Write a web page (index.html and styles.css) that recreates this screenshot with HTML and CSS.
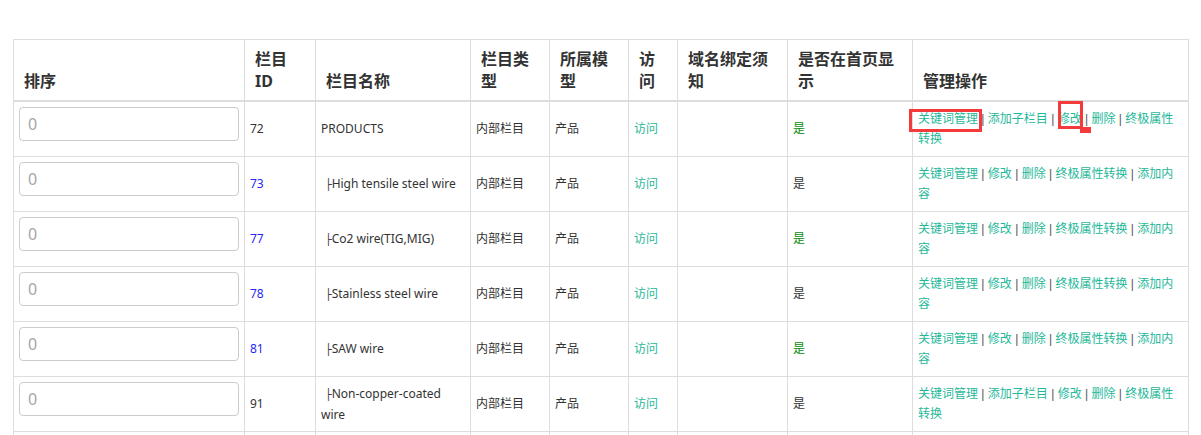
FILE: index.html
```html
<!DOCTYPE html>
<html lang="zh-CN">
<head>
<meta charset="utf-8">
<title>栏目管理</title>
<link rel="stylesheet" href="styles.css">
</head>
<body>
<div class="page">
  <table class="list">
    <colgroup>
      <col class="c-sort"><col class="c-id"><col class="c-name"><col class="c-type"><col class="c-model"><col class="c-visit"><col class="c-domain"><col class="c-home"><col class="c-ops">
    </colgroup>
    <thead>
      <tr>
        <th>排序</th>
        <th>栏目<br>ID</th>
        <th>栏目名称</th>
        <th>栏目类型</th>
        <th>所属模型</th>
        <th>访问</th>
        <th>域名绑定须知</th>
        <th>是否在首页显示</th>
        <th>管理操作</th>
      </tr>
    </thead>
    <tbody>
      <tr>
        <td><input class="sort-input" type="text" placeholder="0"></td>
        <td>72</td>
        <td>PRODUCTS</td>
        <td>内部栏目</td>
        <td>产品</td>
        <td><a class="lnk">访问</a></td>
        <td></td>
        <td><span class="yes">是</span></td>
        <td class="ops"><a class="lnk">关键词管理</a><span class="sep"> | </span><a class="lnk">添加子栏目</a><span class="sep"> | </span><a class="lnk">修改</a><span class="sep"> | </span><a class="lnk">删除</a><span class="sep"> | </span><a class="lnk">终极属性转换</a></td>
      </tr>
      <tr>
        <td><input class="sort-input" type="text" placeholder="0"></td>
        <td><a class="idl">73</a></td>
        <td><span class="tree">├</span>High tensile steel wire</td>
        <td>内部栏目</td>
        <td>产品</td>
        <td><a class="lnk">访问</a></td>
        <td></td>
        <td>是</td>
        <td class="ops"><a class="lnk">关键词管理</a><span class="sep"> | </span><a class="lnk">修改</a><span class="sep"> | </span><a class="lnk">删除</a><span class="sep"> | </span><a class="lnk">终极属性转换</a><span class="sep"> | </span><a class="lnk">添加内容</a></td>
      </tr>
      <tr>
        <td><input class="sort-input" type="text" placeholder="0"></td>
        <td><a class="idl">77</a></td>
        <td><span class="tree">├</span>Co2 wire(TIG,MIG)</td>
        <td>内部栏目</td>
        <td>产品</td>
        <td><a class="lnk">访问</a></td>
        <td></td>
        <td><span class="yes">是</span></td>
        <td class="ops"><a class="lnk">关键词管理</a><span class="sep"> | </span><a class="lnk">修改</a><span class="sep"> | </span><a class="lnk">删除</a><span class="sep"> | </span><a class="lnk">终极属性转换</a><span class="sep"> | </span><a class="lnk">添加内容</a></td>
      </tr>
      <tr>
        <td><input class="sort-input" type="text" placeholder="0"></td>
        <td><a class="idl">78</a></td>
        <td><span class="tree">├</span>Stainless steel wire</td>
        <td>内部栏目</td>
        <td>产品</td>
        <td><a class="lnk">访问</a></td>
        <td></td>
        <td>是</td>
        <td class="ops"><a class="lnk">关键词管理</a><span class="sep"> | </span><a class="lnk">修改</a><span class="sep"> | </span><a class="lnk">删除</a><span class="sep"> | </span><a class="lnk">终极属性转换</a><span class="sep"> | </span><a class="lnk">添加内容</a></td>
      </tr>
      <tr>
        <td><input class="sort-input" type="text" placeholder="0"></td>
        <td><a class="idl">81</a></td>
        <td><span class="tree">├</span>SAW wire</td>
        <td>内部栏目</td>
        <td>产品</td>
        <td><a class="lnk">访问</a></td>
        <td></td>
        <td><span class="yes">是</span></td>
        <td class="ops"><a class="lnk">关键词管理</a><span class="sep"> | </span><a class="lnk">修改</a><span class="sep"> | </span><a class="lnk">删除</a><span class="sep"> | </span><a class="lnk">终极属性转换</a><span class="sep"> | </span><a class="lnk">添加内容</a></td>
      </tr>
      <tr>
        <td><input class="sort-input" type="text" placeholder="0"></td>
        <td>91</td>
        <td><span class="tree">├</span>Non-copper-coated wire</td>
        <td>内部栏目</td>
        <td>产品</td>
        <td><a class="lnk">访问</a></td>
        <td></td>
        <td>是</td>
        <td class="ops"><a class="lnk">关键词管理</a><span class="sep"> | </span><a class="lnk">添加子栏目</a><span class="sep"> | </span><a class="lnk">修改</a><span class="sep"> | </span><a class="lnk">删除</a><span class="sep"> | </span><a class="lnk">终极属性转换</a></td>
      </tr>
      <tr>
        <td><input class="sort-input" type="text" placeholder="0"></td>
        <td><a class="idl">92</a></td>
        <td><span class="tree">├</span>Copper-coated wire</td>
        <td>内部栏目</td>
        <td>产品</td>
        <td><a class="lnk">访问</a></td>
        <td></td>
        <td>是</td>
        <td class="ops"><a class="lnk">关键词管理</a><span class="sep"> | </span><a class="lnk">修改</a><span class="sep"> | </span><a class="lnk">删除</a><span class="sep"> | </span><a class="lnk">终极属性转换</a><span class="sep"> | </span><a class="lnk">添加内容</a></td>
      </tr>
    </tbody>
  </table>

  <div class="mark mark-kw"></div>
  <div class="mark mark-edit"></div>
  <div class="mark-dot"></div>
</div>
</body>
</html>
```

FILE: styles.css
```css
html, body {
  margin: 0;
  padding: 0;
  background: #fff;
}

body {
  font-family: "Noto Sans", "Noto Sans CJK SC", sans-serif;
  font-size: 12px;
  color: #333;
  overflow: hidden;
}

.page {
  position: relative;
  padding: 39px 12px 0 13px;
}

.list {
  width: 1176px;
  table-layout: fixed;
  border-collapse: collapse;
  border: 1px solid #ddd;
}

.c-sort   { width: 231px; }
.c-id     { width: 71px; }
.c-name   { width: 155px; }
.c-type   { width: 79px; }
.c-model  { width: 79px; }
.c-visit  { width: 49px; }
.c-domain { width: 110px; }
.c-home   { width: 125px; }
.c-ops    { width: 276px; }

.list th {
  font-family: "Noto Sans", "Noto Sans CJK SC", sans-serif;
  font-size: 16px;
  font-weight: bold;
  line-height: 22px;
  color: #333;
  text-align: left;
  vertical-align: bottom;
  padding: 8px 10px 8px 10px;
  border: 1px solid #ddd;
  border-bottom: 2px solid #ddd;
}

.list td {
  font-size: 12px;
  line-height: 20px;
  vertical-align: middle;
  padding: 5px 5px 5px 5px;
  border: 1px solid #ddd;
  height: 44px;
  word-break: break-word;
}

.sort-input {
  display: block;
  box-sizing: border-box;
  width: 100%;
  height: 34px;
  margin: 0 0 10px 0;
  padding: 4px 8px;
  border: 1px solid #ccc;
  border-radius: 4px;
  font-family: "Noto Sans", sans-serif;
  font-size: 16px;
  color: #555;
  background: #fff;
}

.sort-input::placeholder {
  color: #a6a6a6;
}

.lnk {
  color: #1fb89a;
  text-decoration: none;
}

.idl {
  color: #2727f5;
  text-decoration: none;
}

.yes {
  color: #0a8a0a;
}

.sep {
  font-family: "Liberation Sans", sans-serif;
  color: #555;
}

.tree {
  font-family: "DejaVu Sans", sans-serif;
  font-size: 11px;
  padding-left: 4px;
  color: #444;
}

.ops {
  padding-right: 6px;
}

.mark {
  position: absolute;
  box-sizing: border-box;
  border: 3px solid #f43a3a;
}

.mark-kw {
  left: 909px;
  top: 109px;
  width: 73px;
  height: 23px;
}

.mark-edit {
  left: 1058px;
  top: 101px;
  width: 25px;
  height: 28px;
}

.mark-dot {
  position: absolute;
  left: 1080px;
  top: 127px;
  width: 11px;
  height: 6px;
  background: #f43a3a;
}
```
